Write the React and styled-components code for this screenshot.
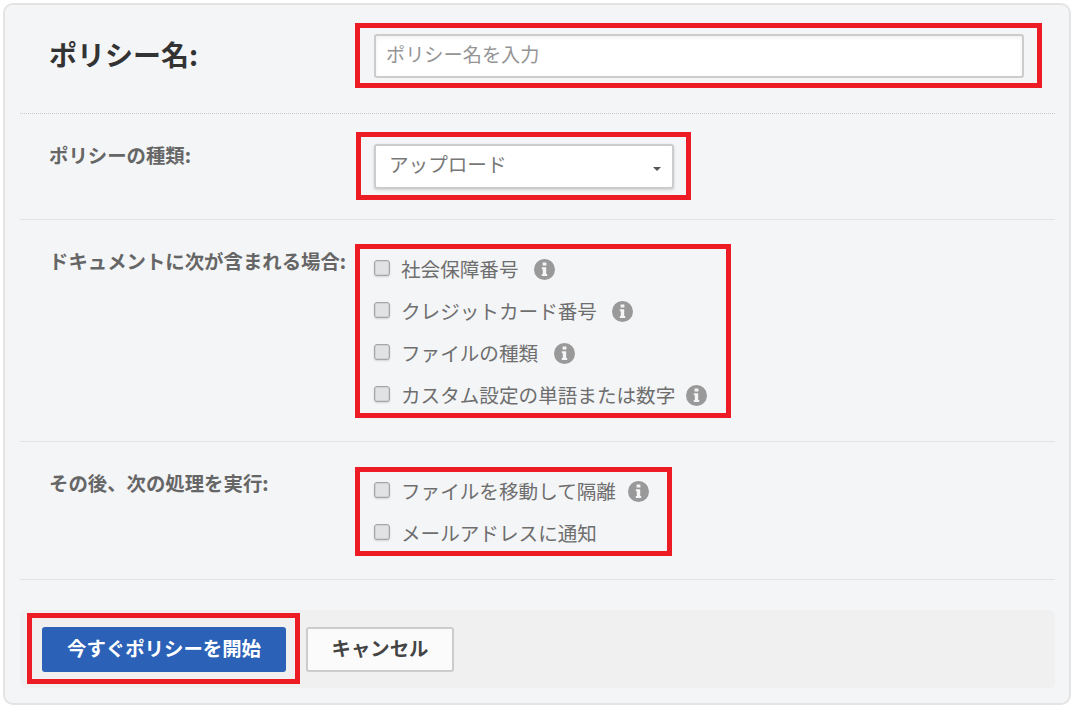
import React from "react";
import styled, { createGlobalStyle } from "styled-components";

const GlobalStyle = createGlobalStyle`
  html, body {
    margin: 0;
    padding: 0;
    background: #fff;
  }
  body {
    font-family: "Noto Sans CJK JP", "Noto Sans", sans-serif;
    font-size: 19.6px;
  }
  * {
    box-sizing: border-box;
  }
`;

const Page = styled.div`
  width: 1074px;
  height: 709px;
  padding: 3px;
`;

const Card = styled.div`
  width: 1068px;
  height: 702px;
  display: flex;
  flex-direction: column;
  padding: 0 14px 15px 15px;
  background: #f4f5f7;
  border: 2px solid #e4e4e4;
  border-radius: 10px;
`;

const Row = styled.div`
  display: grid;
  grid-template-columns: 306px 1fr;
  align-content: start;
  align-items: ${(p) => (p.$center ? "center" : "start")};
  height: ${(p) => p.$height}px;
  padding: ${(p) => p.$top}px 0 0 29px;
  border-bottom: 1px ${(p) => p.$line || "solid"} ${(p) => (p.$line === "dotted" ? "#c9cbcd" : "#e2e3e5")};
`;

const Title = styled.h1`
  margin: -4px 0 0;
  font-size: 28px;
  font-weight: 700;
  line-height: 36px;
  color: #333;
`;

const Label = styled.label`
  display: block;
  padding-top: ${(p) => p.$offset}px;
  font-size: 19.4px;
  font-weight: 700;
  line-height: 26px;
  white-space: nowrap;
  color: #666;
`;

const Highlight = styled.div`
  width: ${(p) => (p.$width ? `${p.$width}px` : "fit-content")};
  margin-left: ${(p) => p.$inset || 0}px;
  padding: ${(p) => p.$padding};
  border: 5px solid #ed1c24;
`;

const TextInput = styled.input`
  display: block;
  width: 650px;
  height: 44px;
  padding: 0 10px 4px;
  font-family: inherit;
  font-size: 19.2px;
  color: #666;
  background: #fff;
  border: 2px solid #ccc;
  border-radius: 3px;
  outline: none;
  box-shadow: inset 0 2px 4px rgba(0, 0, 0, 0.06);

  &::placeholder {
    color: #949494;
    opacity: 1;
  }
`;

const Select = styled.div`
  display: flex;
  align-items: center;
  justify-content: space-between;
  width: 300px;
  height: 45px;
  padding: 0 11px 0 13px;
  color: #777;
  background: #fff;
  border: 2px solid #ccc;
  border-radius: 3px;
  box-shadow: 0 1px 3px rgba(0, 0, 0, 0.15);
`;

const SelectText = styled.span`
  line-height: 26px;
  margin-top: -5px;
`;

const Caret = styled.span`
  width: 0;
  height: 0;
  margin-top: 4px;
  border-top: 4px solid #555;
  border-left: 4px solid transparent;
  border-right: 4px solid transparent;
`;

const OptionList = styled.div`
  display: flex;
  flex-direction: column;
  gap: 16px;
`;

const Option = styled.label`
  display: flex;
  align-items: center;
  height: 26px;
  line-height: 26px;
  white-space: nowrap;
  color: #6e6e6e;
`;

const Check = styled.input.attrs({ type: "checkbox" })`
  appearance: none;
  flex: none;
  width: 16px;
  height: 16px;
  margin: -3px 11px 0 0;
  background: #e1e2e3;
  border: 1px solid #a6a6a6;
  border-radius: 3px;
  box-shadow: inset 0 0 0 1px #d2d2d2, 0 1px 2px rgba(0, 0, 0, 0.14);
`;

const InfoSvg = styled.svg`
  flex: none;
  width: 21px;
  height: 21px;
  margin-left: ${(p) => p.$gap}px;
  fill: #999;
`;

// circle with the "i" cut out of it
const InfoIcon = ({ gap }) => (
  <InfoSvg $gap={gap} viewBox="0 0 21 21" aria-hidden="true">
    <path
      fillRule="evenodd"
      d="M10.5 0a10.5 10.5 0 1 1 0 21a10.5 10.5 0 0 1 0-21ZM8.6 3.4v3h3.8v-3ZM7.8 8.3v1.9h1v4.8h-1v1.9h5.4v-1.9h-1V8.3Z"
    />
  </InfoSvg>
);

const Footer = styled.div`
  display: flex;
  align-items: center;
  gap: 6px;
  width: 1035px;
  height: 78px;
  margin-top: 30px;
  padding: 0 0 1px 7px;
  background: #f0f0f0;
  border-radius: 6px;
`;

const PrimaryButton = styled.button`
  display: block;
  width: 244px;
  height: 45px;
  padding: 0 0 4px;
  font-family: inherit;
  font-size: 19.4px;
  font-weight: 700;
  color: #fff;
  background: #2b62b8;
  border: none;
  border-radius: 3px;
`;

const CancelButton = styled.button`
  width: 148px;
  height: 45px;
  margin-top: 1px;
  padding: 0 0 4px;
  font-family: inherit;
  font-size: 19.4px;
  font-weight: 700;
  color: #444;
  background: #fbfbfb;
  border: 2px solid #ccc;
  border-radius: 3px;
`;

const conditions = [
  { text: "社会保障番号", gap: 15 },
  { text: "クレジットカード番号", gap: 15 },
  { text: "ファイルの種類", gap: 16 },
  { text: "カスタム設定の単語または数字", gap: 11 },
];

const actions = [
  { text: "ファイルを移動して隔離", gap: 12 },
  { text: "メールアドレスに通知" },
];

export default function App() {
  return (
    <Page>
      <GlobalStyle />
      <Card>
        <Row $height={109} $top={18} $line="dotted" $center>
          <Title>ポリシー名:</Title>
          <Highlight $width={687} $padding="6px 0 5px 14px">
            <TextInput placeholder="ポリシー名を入力" />
          </Highlight>
        </Row>

        <Row $height={106} $top={18}>
          <Label $offset={10}>ポリシーの種類:</Label>
          <Highlight $width={335} $inset={1} $padding="7px 0 6px 13px">
            <Select>
              <SelectText>アップロード</SelectText>
              <Caret />
            </Select>
          </Highlight>
        </Row>

        <Row $height={222} $top={24}>
          <Label $offset={4}>ドキュメントに次が含まれる場合:</Label>
          <Highlight $padding="7px 19px 5px 14px">
            <OptionList>
              {conditions.map((item) => (
                <Option key={item.text}>
                  <Check />
                  {item.text}
                  <InfoIcon gap={item.gap} />
                </Option>
              ))}
            </OptionList>
          </Highlight>
        </Row>

        <Row $height={138} $top={25}>
          <Label $offset={3}>その後、次の処理を実行:</Label>
          <Highlight $padding="6px 18px 5px 14px">
            <OptionList>
              {actions.map((item) => (
                <Option key={item.text}>
                  <Check />
                  {item.text}
                  {item.gap && <InfoIcon gap={item.gap} />}
                </Option>
              ))}
            </OptionList>
          </Highlight>
        </Row>

        <Footer>
          <Highlight $padding="9px 9px 7px 10px">
            <PrimaryButton>今すぐポリシーを開始</PrimaryButton>
          </Highlight>
          <CancelButton>キャンセル</CancelButton>
        </Footer>
      </Card>
    </Page>
  );
}
